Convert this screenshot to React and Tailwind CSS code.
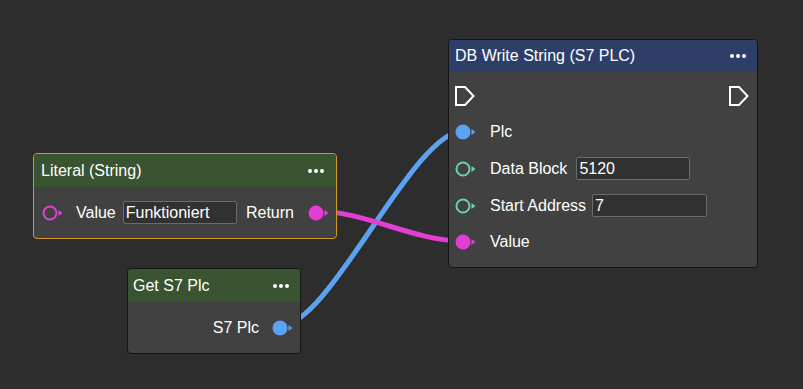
import React from "react";

function Pin({ color, filled }) {
  return (
    <svg width="21" height="16" viewBox="0 0 21 16" className="shrink-0">
      {filled ? (
        <circle cx="8" cy="8" r="7.5" fill={color} />
      ) : (
        <circle cx="8" cy="8" r="6.5" fill="none" stroke={color} strokeWidth="2" />
      )}
      <polygon points="16.5,5 20.5,8 16.5,11" fill={color} />
    </svg>
  );
}

function Exec() {
  return (
    <svg width="20" height="20" viewBox="0 0 20 20" className="shrink-0">
      <polygon
        points="1,1 10,1 18.5,10 10,19 1,19"
        fill="none"
        stroke="#ffffff"
        strokeWidth="2"
        strokeLinejoin="miter"
      />
    </svg>
  );
}

function Dots() {
  return (
    <div className="flex items-center gap-[2px]">
      <span className="w-[4px] h-[4px] rounded-full bg-white" />
      <span className="w-[4px] h-[4px] rounded-full bg-white" />
      <span className="w-[4px] h-[4px] rounded-full bg-white" />
    </div>
  );
}

function Field({ value, className }) {
  return (
    <div
      className={
        "h-[23px] bg-[#313131] border border-[#6b6b6b] rounded-[2px] pl-[2px] flex items-center text-white text-[16px] leading-none " +
        className
      }
    >
      {value}
    </div>
  );
}

export default function App() {
  const BLUE = "#5ba3f2";
  const MAGENTA = "#e23ed4";
  const MINT = "#66d3a8";
  return (
    <div className="relative w-[803px] h-[389px] bg-[#2d2d2d] overflow-hidden font-['Liberation_Sans',Arial,sans-serif] text-white text-[16px]">
      <svg className="absolute inset-0" width="803" height="389" viewBox="0 0 803 389">
        <path d="M 280 326 C 330 326, 413 131, 463 131" fill="none" stroke={BLUE} strokeWidth="5" />
        <path d="M 315 211 C 365 211, 413 241, 463 241" fill="none" stroke={MAGENTA} strokeWidth="5" />
      </svg>

      {/* DB Write String node */}
      <div className="absolute left-[448px] top-[39px] w-[310px] h-[229px] rounded-[4px] border border-[#151515] bg-[#414141] overflow-hidden flex flex-col">
        <div className="h-[32px] bg-[#2d3f68] flex items-center justify-between pl-[6px] pr-[11px]">
          <span className="leading-none">DB Write String (S7 PLC)</span>
          <Dots />
        </div>
        <div className="pt-[6px] pl-[6px] pr-[8px] flex flex-col">
          <div className="h-[36px] flex items-center justify-between">
            <Exec />
            <Exec />
          </div>
          <div className="h-[36px] flex items-center">
            <Pin color={BLUE} filled />
            <span className="ml-[14px]">Plc</span>
          </div>
          <div className="h-[37px] flex items-center">
            <Pin color={MINT} />
            <span className="ml-[14px]">Data Block</span>
            <Field value="5120" className="ml-[9px] w-[114px]" />
          </div>
          <div className="h-[37px] flex items-center">
            <Pin color={MINT} />
            <span className="ml-[14px]">Start Address</span>
            <Field value="7" className="ml-[6px] w-[115px]" />
          </div>
          <div className="h-[36px] flex items-center">
            <Pin color={MAGENTA} filled />
            <span className="ml-[14px]">Value</span>
          </div>
        </div>
      </div>

      {/* Literal (String) node */}
      <div className="absolute left-[33px] top-[153px] w-[304px] h-[86px] rounded-[4px] border border-[#d4982b] bg-[#414141] overflow-hidden flex flex-col">
        <div className="h-[33px] bg-[#3a5330] flex items-center justify-between pl-[7px] pr-[12px] shrink-0">
          <span className="leading-none">Literal (String)</span>
          <Dots />
        </div>
        <div className="flex-1 flex items-center pl-[8px] pr-[7px]">
          <Pin color={MAGENTA} />
          <span className="ml-[13px]">Value</span>
          <Field value="Funktioniert" className="ml-[7px] w-[114px]" />
          <div className="ml-auto flex items-center">
            <span>Return</span>
            <span className="ml-[14px] flex">
              <Pin color={MAGENTA} filled />
            </span>
          </div>
        </div>
      </div>

      {/* Get S7 Plc node */}
      <div className="absolute left-[127px] top-[268px] w-[174px] h-[86px] rounded-[4px] border border-[#151515] bg-[#414141] overflow-hidden flex flex-col">
        <div className="h-[33px] bg-[#3a5330] flex items-center justify-between pl-[5px] pr-[11px] shrink-0">
          <span className="leading-none">Get S7 Plc</span>
          <Dots />
        </div>
        <div className="flex-1 flex items-center justify-end pr-[7px]">
          <span>S7 Plc</span>
          <span className="ml-[13px] flex">
            <Pin color={BLUE} filled />
          </span>
        </div>
      </div>
    </div>
  );
}
